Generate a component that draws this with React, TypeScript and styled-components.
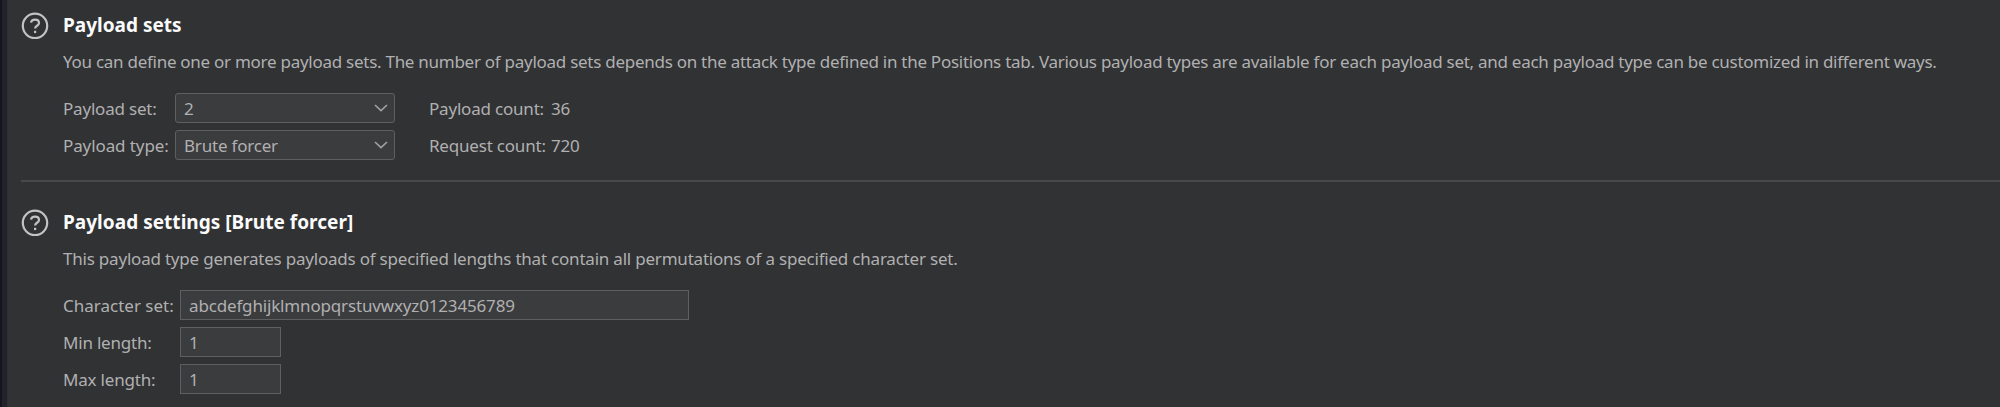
import React from 'react';
import styled, { createGlobalStyle } from 'styled-components';

const GlobalStyle = createGlobalStyle`
  * { box-sizing: border-box; }
  body {
    margin: 0;
    background: #313234;
    color: #b0b0b1;
    font: 17px/30px "Noto Sans", sans-serif;
    letter-spacing: -0.2px;
    overflow: hidden;
  }
`;

const Window = styled.div`
  display: flex;
  height: 407px;
`;

const Gutter = styled.div`
  flex: none;
  width: 7px;
  border-left: 2px solid #14151a;
  background: #22222d;
`;

const Panel = styled.main`
  flex: 1;
  min-width: 0;
  border-left: 1px solid #2e2f33;
  padding-left: 13px;
`;

const Section = styled.section<{ $top: number }>`
  display: grid;
  grid-template-columns: 42px 1fr;
  padding-top: ${(p) => p.$top}px;
`;

const HelpSvg = styled.svg`
  display: block;
  width: 28px;
  height: 28px;
  margin-top: 2px;
`;

const Title = styled.h2<{ $tracking?: number }>`
  margin: 0;
  font-size: 19px;
  font-weight: 700;
  line-height: 30px;
  letter-spacing: ${(p) => p.$tracking ?? 0}px;
  color: #fbfbfb;
`;

const Description = styled.p<{ $tracking: number }>`
  margin: 7px 0 16px;
  line-height: 30px;
  white-space: nowrap;
  letter-spacing: ${(p) => p.$tracking}px;
`;

const Form = styled.div`
  display: flex;
  flex-direction: column;
  gap: 7px;
`;

const Row = styled.div`
  display: flex;
  height: 30px;
  line-height: 31px;
`;

const Label = styled.label<{ $width: number; $tracking?: number }>`
  flex: none;
  width: ${(p) => p.$width}px;
  white-space: nowrap;
  letter-spacing: ${(p) => p.$tracking ?? -0.2}px;
`;

const Select = styled.div`
  display: flex;
  align-items: center;
  justify-content: space-between;
  width: 220px;
  height: 30px;
  margin-right: 34px;
  padding: 0 6px 0 8px;
  border: 1px solid #5e5f60;
  border-radius: 3px;
  background: #3b3c3e;
`;

const Field = styled.div<{ $width: number }>`
  width: ${(p) => p.$width}px;
  height: 30px;
  padding-left: 8px;
  border: 1px solid #5e5f60;
  background: #3b3c3e;
  line-height: 29px;
  letter-spacing: -0.16px;
`;

const Divider = styled.hr`
  height: 2px;
  margin: 20px 0 0;
  border: 0;
  background: #48494b;
`;

const HelpIcon = () => (
  <HelpSvg viewBox="0 0 28 28" fill="none" stroke="#c3c3c4" strokeWidth="2.2">
    <circle cx="14" cy="13.8" r="12.2" />
    <path d="M10 10.700C10.300 8.700 12 7.700 14 7.700c2.300 0 4 1.200 4 3.200 0 2.900-3.900 2.800-3.900 5.500" />
    <path d="M14.100 18.800v2.300" />
  </HelpSvg>
);

const Chevron = () => (
  <svg width="14" height="8" viewBox="0 0 14 8" fill="none" stroke="#a0a1a2" strokeWidth="1.6">
    <path d="M1 1l6 5.700L13 1" />
  </svg>
);

export default function App() {
  return (
    <>
      <GlobalStyle />
      <Window>
        <Gutter />
        <Panel>
          <Section $top={10}>
            <HelpIcon />
            <div>
              <Title>Payload sets</Title>
              <Description $tracking={-0.27}>
                You can define one or more payload sets. The number of payload sets depends on the attack type defined in the Positions tab. Various payload types are available for each payload set, and each payload type can be customized in different ways.
              </Description>
              <Form>
                <Row>
                  <Label $width={112}>Payload set:</Label>
                  <Select>2<Chevron /></Select>
                  <Label $width={122}>Payload count:</Label>
                  <span>36</span>
                </Row>
                <Row>
                  <Label $width={112} $tracking={-0.1}>Payload type:</Label>
                  <Select>Brute forcer<Chevron /></Select>
                  <Label $width={122}>Request count:</Label>
                  <span>720</span>
                </Row>
              </Form>
            </div>
          </Section>
          <Divider />
          <Section $top={25}>
            <HelpIcon />
            <div>
              <Title $tracking={0.03}>Payload settings [Brute forcer]</Title>
              <Description $tracking={-0.21}>
                This payload type generates payloads of specified lengths that contain all permutations of a specified character set.
              </Description>
              <Form>
                <Row>
                  <Label $width={117} $tracking={0}>Character set:</Label>
                  <Field $width={509}>abcdefghijklmnopqrstuvwxyz0123456789</Field>
                </Row>
                <Row>
                  <Label $width={117}>Min length:</Label>
                  <Field $width={101}>1</Field>
                </Row>
                <Row>
                  <Label $width={117}>Max length:</Label>
                  <Field $width={101}>1</Field>
                </Row>
              </Form>
            </div>
          </Section>
        </Panel>
      </Window>
    </>
  );
}
